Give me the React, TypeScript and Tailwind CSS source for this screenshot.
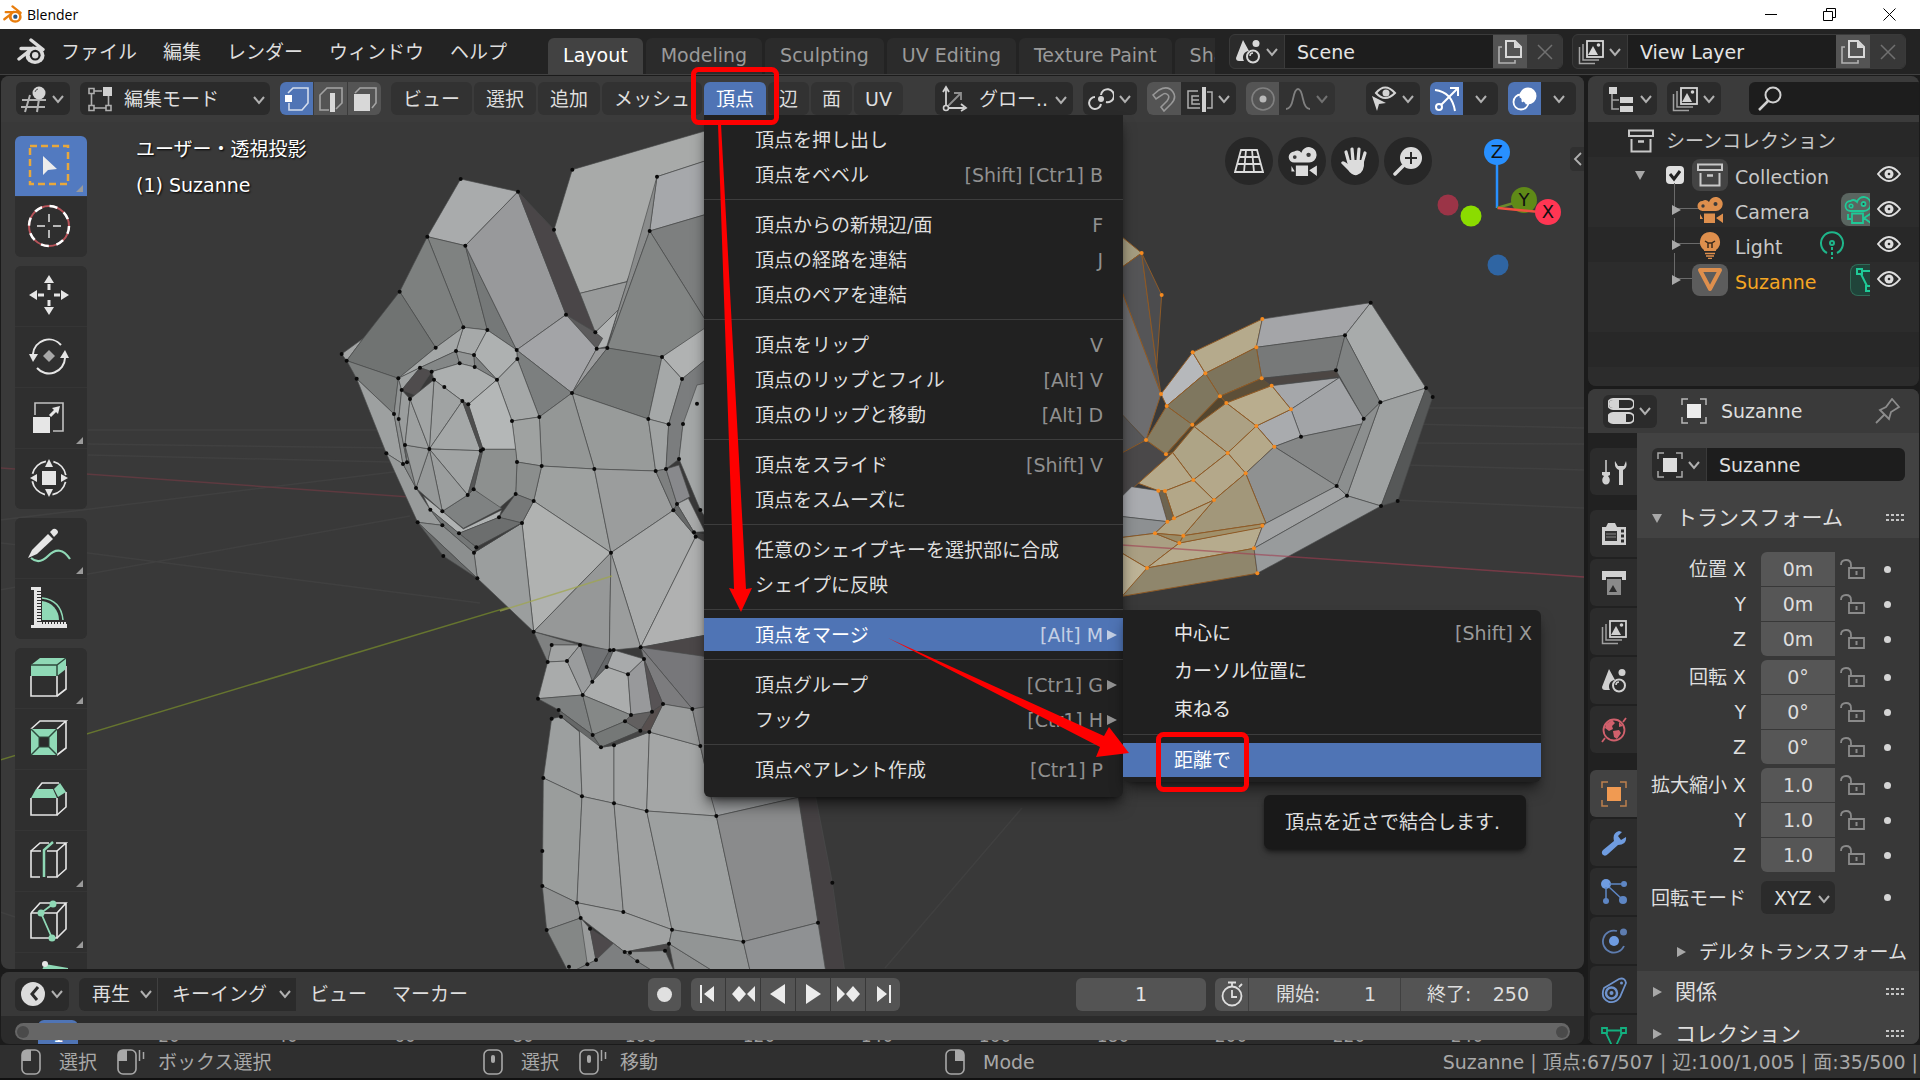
import type { ReactNode } from "react";
import clsx from "clsx";

type Face = [fill: string, points: string, selected?: boolean];

const HEAD_FACES: Face[] = [
  ["#a2a4a4", "65,672 130,625 80,692"],
  ["#a9abac", "422,147 594,185 436,347 322,320"],
  ["#7f8281", "322,320 436,347 502,600 430,592"],
  ["#7d807f", "322,320 430,592 347,653 239,485"],
  ["#707372", "239,485 347,653 235,745 80,692 130,625"],
  ["#757878", "436,347 590,660 502,600"],
  ["#98999b", "436,347 594,185 738,554 590,660"],
  ["#4a4648", "594,185 702,299 826,607 738,554"],
  ["#5c5b5c", "738,554 826,607 848,625 830,656"],
  ["#a3a4a7", "590,660 738,554 830,656 756,789"],
  ["#a8aaa9", "757,119 1155,3 1155,93 1011,140 989,303 920,455 780,490 702,299"],
  ["#989a9a", "780,490 922,455 895,540 826,607"],
  ["#b0b2b2", "895,540 860,650 830,656 848,625 826,607"],
  ["#a6a8ab", "1011,140 1155,93 1155,254 989,303"],
  ["#8a8c8c", "1011,140 989,303 862,654 895,540 920,460"],
  ["#7d7f7f", "989,303 1155,254 1155,568"],
  ["#828584", "989,303 1155,568 1155,596 1026,681 862,654"],
  ["#9a9b9c", "862,654 756,789 830,656"],
  ["#757877", "862,654 1026,681 985,867 756,789"],
  ["#7c7f7f", "590,660 756,789 658,861 592,687"],
  ["#989b9a", "756,789 985,867 1007,1023 823,1017"],
  ["#949796", "756,789 823,1017 665,1008 658,861"],
  ["#9ea1a0", "665,1008 823,1017 873,1268 641,1113"],
  ["#9b9d9d", "823,1017 1007,1023 1060,1141 873,1268"],
  ["#b0b2b1", "641,1113 873,1268 641,1505 606,1179"],
  ["#a9abab", "873,1268 1060,1141 1127,1220 962,1552"],
  ["#9b9e9e", "606,1179 641,1505 472,1345 462,1268"],
  ["#a6a9a9", "430,592 502,600 462,675 408,663"],
  ["#a4a7a7", "347,653 430,592 408,663 300,713 235,745"],
  ["#aeb1b1", "502,600 590,660 592,687 531,749 462,675"],
  ["#a5a8a8", "592,687 658,861 576,873 531,749"],
  ["#9fa2a1", "658,861 665,1008 591,996 576,873"],
  ["#8b8e8d", "591,996 665,1008 641,1113 587,1092"],
  ["#777979", "587,1092 641,1113 606,1179 537,1162"],
  ["#7b7e7d", "80,692 235,745 222,852 110,746"],
  ["#9da0a0", "110,746 222,852 249,1002 199,970"],
  ["#989b9b", "199,970 249,1002 288,1074 331,1139 367,1186 293,1177"],
  ["#8c8f8f", "293,1177 367,1186 462,1268 472,1345"],
  ["#666868", "293,1177 472,1345 370,1278"],
  ["#8f9292", "235,745 245,780 236,867 261,997 249,1002 222,852"],
  ["#9a9d9d", "245,780 270,807 255,945 261,997 236,867"],
  ["#848787", "255,945 288,1074 249,1002 261,997"],
  ["#a0a3a3", "235,745 300,713 245,780"],
  ["#848787", "300,713 408,663 419,700 335,725"],
  ["#919494", "408,663 462,675 464,711 419,700"],
  ["#7f8282", "462,675 531,749 464,711"],
  ["#acafaf", "335,725 419,700 464,711 531,749 445,823 427,813 342,749"],
  ["#4f4c4d", "245,780 300,713 335,725 308,765 290,797"],
  ["#b4b7b7", "445,823 531,749 576,873 587,958 489,958"],
  ["#8d908f", "489,958 587,958 591,996 587,1092 537,1135 461,1078"],
  ["#7f8282", "443,1095 461,1078 545,1135 430,1195 367,1144"],
  ["#b0b3b3", "310,1098 367,1144 430,1197 545,1140 537,1162 417,1210 331,1139"],
  ["#6c6e6e", "417,1210 537,1162 606,1179 469,1252"],
  ["#747777", "331,1139 417,1210 469,1252 462,1268 367,1186"],
  ["#3a3a3a", "469,1252 606,1179 462,1268"],
  ["#a0a3a3", "328,957 342,749 427,813"],
  ["#a5a8a8", "328,957 427,813 482,962"],
  ["#a1a4a4", "328,957 482,962 443,1095"],
  ["#9b9e9e", "328,957 443,1095 367,1144"],
  ["#969999", "328,957 367,1144 288,1074"],
  ["#989b9b", "328,957 288,1074 255,945"],
  ["#9ea1a1", "328,957 255,945 270,807"],
  ["#a1a4a4", "328,957 270,807 342,749"],
  ["#4e4e4e", "427,813 445,823 489,958 482,962"],
  ["#555656", "482,962 489,958 461,1078 443,1095"],
  ["#b0b2b2", "1026,681 1155,594 1155,692 1086,747"],
  ["#a5a8a8", "985,867 1026,681 1086,747 1046,883"],
  ["#a0a3a3", "985,867 1046,883 1038,1017 1007,1023"],
  ["#7b7d7e", "1046,883 1086,747 1155,690 1155,800 1089,882 1077,987 1038,1017"],
  ["#a4a7a7", "1089,882 1131,765 1155,760 1155,1160 1141,1140 1077,987"],
  ["#7e8080", "1007,1023 1038,1017 1071,1122 1060,1141"],
  ["#88898c", "1038,1017 1077,1005 1110,1100 1071,1122"],
  ["#a9abab", "1071,1122 1105,1105 1155,1205 1122,1207"],
  ["#666868", "1060,1141 1071,1122 1122,1207 1127,1220"],
  ["#444343", "1122,1207 1155,1215 1155,1235"],
  ["#b0b1b1", "1127,1220 1155,1235 1155,1516 962,1552"]
];

const HEAD_DOTS =
  "422,147 594,185 436,347 322,320 239,485 347,653 235,745 80,692 65,672 110,746 702,299 757,119 1011,140 989,303 738,554 826,607 830,656 862,654 590,660 592,687 756,789 658,861 502,600 430,592 408,663 462,675 464,711 419,700 531,749 300,713 335,725 245,780 342,749 373,771 427,813 445,823 270,807 222,852 236,867 255,945 249,1002 261,997 328,957 482,962 489,958 576,873 591,996 665,1008 823,1017 1007,1023 1038,1017 985,867 1046,883 1026,681 1086,747 1089,882 1131,821 1077,987 587,1092 641,1113 606,1179 537,1162 461,1078 443,1095 367,1144 288,1074 331,1139 367,1186 293,1177 417,1210 469,1252 462,1268 472,1345 370,1278 199,970 873,1268 1060,1141 1071,1122 1141,1140 1122,1207 1127,1220";

const JAW_FACES: Face[] = [
  ["#969898", "333,-22 101,215 328,272"],
  ["#9b9d9d", "333,-22 422,262 341,270 328,272"],
  ["#4b4748", "422,262 620,225 620,292"],
  ["#77777a", "422,262 620,290 620,440 577,447"],
  ["#7f8181", "101,215 240,255 155,255 143,306"],
  ["#a2a4a4", "155,255 240,255 201,303 143,306"],
  ["#717375", "240,255 330,270 277,365"],
  ["#66686a", "328,272 341,270 320,321 277,365"],
  ["#a9abab", "143,306 201,303 248,405 114,416"],
  ["#9a9c9d", "201,303 240,255 277,365 248,405"],
  ["#a8aaab", "341,270 432,297 384,343 320,321"],
  ["#abadad", "320,321 384,343 393,465 248,405 277,365"],
  ["#98999b", "384,343 432,297 456,455 393,465"],
  ["#7c7c7e", "422,262 577,447 489,432 432,297"],
  ["#575355", "432,297 489,432 456,455"],
  ["#9c9f9f", "155,476 183,470 238,515 246,709 130,654"],
  ["#a2a4a4", "238,505 303,562 342,556 342,730 246,709"],
  ["#a3a5a5", "342,556 448,516 440,753 342,730"],
  ["#a4a6a6", "448,516 601,558 649,768 440,753"],
  ["#9a9c9c", "489,432 577,447 601,558 448,516"],
  ["#88898a", "577,447 620,440 620,640 601,558"],
  ["#7d8080", "114,416 248,405 278,525 176,450"],
  ["#858887", "248,405 393,465 375,484 278,525"],
  ["#666868", "176,450 278,525 303,562 183,470"],
  ["#757877", "278,525 375,484 421,512 303,562"],
  ["#626060", "375,484 393,465 456,455 421,512"],
  ["#574f4e", "456,455 489,432 448,516 421,512"],
  ["#454545", "303,562 421,512 448,516 342,556"],
  ["#9a9d9c", "130,654 246,709 231,1028 127,978"],
  ["#9d9f9f", "246,709 342,730 370,1056 231,1028"],
  ["#9fa1a1", "342,730 440,753 516,1109 370,1056"],
  ["#9da0a0", "440,753 649,768 730,1145 516,1109"],
  ["#9ea0a2", "649,768 630,700 895,700 895,712"],
  ["#8a8b8c", "649,768 895,712 954,1088 730,1145"],
  ["#454143", "895,700 945,700 997,968 1035,1240 978,1240"],
  ["#8f9191", "127,978 231,1028 242,1074 140,1110"],
  ["#848786", "140,1110 242,1074 288,1200 262,1213 207,1240"],
  ["#9a9c9c", "242,1074 270,1106 288,1200 262,1213"],
  ["#a0a2a2", "242,1074 231,1028 370,1056 516,1109 507,1151 374,1176"],
  ["#4d494b", "270,1106 340,1150 288,1200"],
  ["#7d7f80", "340,1150 374,1176 412,1204 470,1240 207,1240 288,1200"],
  ["#4a4849", "374,1176 507,1151 495,1172"],
  ["#8e9090", "374,1176 495,1172 525,1240 470,1240 412,1204"],
  ["#8b8d8d", "507,1151 650,1240 525,1240"],
  ["#929595", "507,1151 516,1109 730,1145 752,1240 650,1240"],
  ["#8f9193", "730,1145 954,1088 978,1240 752,1240"]
];

const JAW_DOTS =
  "101,215 155,255 240,255 330,271 341,270 422,262 432,297 320,321 384,343 201,303 143,306 277,365 248,405 114,416 176,450 183,470 155,476 278,525 303,562 342,556 375,484 393,465 421,512 448,516 456,455 489,432 577,447 601,558 130,654 246,709 342,730 440,753 649,768 127,873 127,978 231,1028 242,1074 270,1106 140,1110 370,1056 516,1109 507,1151 495,1172 374,1176 390,1178 412,1204 288,1200 262,1213 207,1220 730,1145 954,1088 997,968";

const EAR_FACES: Face[] = [
  ["#a59d80", "60,346 125,399 60,446", true],
  ["#555557", "60,446 125,399 170,740 183,822 60,500", true],
  ["#4c4c4e", "125,399 185,525 170,740", true],
  ["#6d6d6f", "60,500 183,822 138,960 60,877", true],
  ["#575759", "60,877 138,960 60,1002"],
  ["#4a4849", "60,1002 138,960 198,1003 218,998 115,1090 60,1140", true],
  ["#b6b8bb", "278,697 316,760 200,858 183,822", true],
  ["#b5aa8c", "487,597 469,682 316,760 278,697", true],
  ["#a4a5a8", "487,597 812,548 735,646 469,682"],
  ["#777979", "469,682 735,646 708,751 485,775"],
  ["#7d745c", "316,760 469,682 485,775 360,829", true],
  ["#7f775f", "200,858 316,760 360,829 277,914", true],
  ["#857c62", "200,858 277,914 198,1003 138,960", true],
  ["#5d4f38", "360,829 485,775 515,797 379,849", true],
  ["#4c4643", "485,775 708,751 718,770 515,797"],
  ["#54462f", "360,829 379,849 283,920 218,998 198,1003 277,914", true],
  ["#a8abab", "812,548 978,804 841,847 735,646"],
  ["#7f8282", "735,646 841,847 791,896 708,751"],
  ["#9ea1a1", "978,804 843,1158 741,1127 841,847"],
  ["#565858", "978,804 998,831 893,1143 843,1158"],
  ["#8c8f8f", "841,847 741,1127 710,1098 791,896"],
  ["#a5a7aa", "515,797 718,773 573,868"],
  ["#a2a4a7", "718,773 791,896 785,912 603,950 573,868"],
  ["#a9abae", "469,918 573,868 603,950 523,980"],
  ["#b9ad8e", "379,849 515,797 573,868 469,918", true],
  ["#aca184", "283,920 379,849 469,918 383,999", true],
  ["#b5a98a", "383,999 469,918 523,980 437,1060", true],
  ["#858787", "603,950 785,912 710,1098 523,980"],
  ["#8f9191", "437,1060 523,980 710,1098 498,1210"],
  ["#aea486", "218,998 283,920 383,999 280,1080", true],
  ["#b4a88a", "280,1080 383,999 437,1060 342,1140", true],
  ["#b5a98a", "115,1090 218,998 280,1080 195,1113 175,1112", true],
  ["#b3a788", "195,1113 280,1080 342,1140 222,1195", true],
  ["#6d6450", "175,1112 195,1113 222,1195 202,1205", true],
  ["#a9abaf", "95,1100 175,1112 202,1205 60,1189 60,1135"],
  ["#8d9092", "60,1189 202,1205 165,1240 60,1253"],
  ["#a2977a", "342,1140 437,1060 498,1210 250,1247", true],
  ["#b0a485", "342,1140 250,1247 165,1240 202,1205 222,1195", true],
  ["#aa9f83", "60,1253 165,1240 238,1269 141,1344 60,1296", true],
  ["#b6ab8d", "238,1269 487,1220 462,1285 141,1344", true],
  ["#a0906a", "250,1247 498,1210 487,1222 238,1269", true],
  ["#9a8a65", "165,1240 250,1247 238,1269", true],
  ["#8f866c", "141,1344 462,1285 472,1360 60,1430", true],
  ["#bdb396", "60,1296 141,1344 60,1436", true],
  ["#a2a4a5", "498,1210 710,1098 741,1127 462,1285 487,1220"],
  ["#989b9c", "462,1285 741,1127 843,1158 472,1360"]
];

const EAR_DOTS = "812,548 735,646 708,751 978,804 998,831 841,847 791,896 603,950 710,1098 741,1127 843,1158 893,1143";
const EAR_SELECTED_DOTS =
  "125,399 185,525 487,597 469,682 278,697 316,760 183,822 200,858 360,829 379,849 485,775 515,797 573,868 277,914 469,918 523,980 138,960 198,1003 383,999 437,1060 280,1080 342,1140 175,1112 195,1113 222,1195 202,1205 165,1240 250,1247 238,1269 487,1217 462,1285 141,1344 472,1360";

const Mesh = ({ faces, origin }: { faces: Face[]; origin: string }) => (
  <g transform={`translate(${origin}) scale(0.33333)`} strokeLinejoin="round">
    {faces.map(([fill, points, selected], i) => (
      <polygon key={i} points={points} fill={fill} stroke={selected ? "#8f5a26" : "#4a4b4b"} strokeWidth={selected ? 3 : 2} />
    ))}
  </g>
);

const Dots = ({ points, origin, color }: { points: string; origin: string; color: string }) => (
  <g transform={`translate(${origin}) scale(0.33333)`} fill={color}>
    {points.split(" ").map((p, i) => {
      const [cx, cy] = p.split(",");
      return <circle key={i} cx={cx} cy={cy} r="6" />;
    })}
  </g>
);

const Scene3D = () => (
  <svg
    className="absolute inset-0 h-full w-full rounded-lg"
    viewBox="1 76 1583 893"
    preserveAspectRatio="xMidYMid slice"
    aria-hidden="true"
  >
    <g stroke="#404040" strokeWidth="1.5" fill="none">
      <path d="M0 590L410 516M0 520L410 470M88 553L480 603M0 543L88 553M88 444L400 448M88 430L390 430M88 455L390 462" />
      <path d="M1410 408H1584M1410 424L1584 428M1412 443L1584 444M1405 465L1584 470M1395 500L1584 508M1022 808L885 968M0 912L15 917" />
    </g>
    <path d="M0 468L410 497" stroke="#5e3a40" strokeWidth="1.5" />
    <path d="M0 760L612 576" stroke="#66752f" strokeWidth="1.5" />
    <Mesh faces={HEAD_FACES} origin="320 130" />
    <Mesh faces={JAW_FACES} origin="500 560" />
    <Dots points={HEAD_DOTS} origin="320 130" color="#0a0a0a" />
    <Dots points={JAW_DOTS} origin="500 560" color="#0a0a0a" />
    <path d="M500 611L612 576" stroke="#a0a64a" strokeOpacity="0.7" strokeWidth="1.5" />
    <Mesh faces={EAR_FACES} origin="1100 120" />
    <Dots points={EAR_DOTS} origin="1100 120" color="#0a0a0a" />
    <Dots points={EAR_SELECTED_DOTS} origin="1100 120" color="#f58a1f" />
    <path d="M1122 545L1584 577" stroke="#a03c50" strokeOpacity="0.6" strokeWidth="1.5" />
  </svg>
);

const Svg = ({ w, h, className, children }: { w: number; h: number; className?: string; children: ReactNode }) => (
  <svg width={w} height={h} viewBox={`0 0 ${w} ${h}`} fill="none" stroke="currentColor" className={clsx("shrink-0", className)} aria-hidden="true">
    {children}
  </svg>
);

const Chevron = ({ className }: { className?: string }) => (
  <Svg w={14} h={10} className={clsx("text-[#b0b0b0]", className)}>
    <path d="M2 2L7 8L12 2" strokeWidth="2" />
  </Svg>
);

const Triangle = ({ open }: { open?: boolean }) => (
  <Svg w={12} h={12} className="text-[#a8a8a8]">
    <path d={open ? "M1 2H11L6 11Z" : "M2 1L11 6L2 11Z"} fill="currentColor" stroke="none" />
  </Svg>
);

const BlenderLogo = ({ w, body, ring, dot }: { w: number; body: string; ring: string; dot: string }) => (
  <svg width={w} height={w} viewBox="0 0 28 28" className="shrink-0" aria-hidden="true">
    <path d="M14 2L26 11.500M4 10.500H22M2 21L16 10" stroke={body} strokeWidth="3.400" strokeLinecap="round" fill="none" />
    <ellipse cx="18" cy="17.500" rx="9.500" ry="8.500" fill={body} />
    <circle cx="18.200" cy="17.200" r="5.400" fill={ring} />
    <circle cx="18.200" cy="17.200" r="3.200" fill={dot} />
  </svg>
);

const SceneIcon = () => (
  <Svg w={26} h={26}>
    <path d="M8 1L14 12A6.500 6.500 0 0 0 9 22H4Q1 22 1 19Z" fill="currentColor" stroke="none" />
    <circle cx="21" cy="4.500" r="3.500" fill="currentColor" stroke="none" />
    <circle cx="18" cy="17.500" r="6" strokeWidth="2" />
    <path d="M15 17A3 3 0 0 1 18 14" strokeWidth="1.500" />
  </Svg>
);

const LayersIcon = () => (
  <Svg w={26} h={26}>
    <rect x="9" y="2" width="16" height="16" strokeWidth="1.800" />
    <path d="M10 16L15 7L20 16Z" fill="currentColor" stroke="none" />
    <circle cx="20.500" cy="6" r="1.800" fill="currentColor" stroke="none" />
    <path d="M5 5V21H21M1.500 8V24.500H17" strokeWidth="1.500" opacity="0.7" />
  </Svg>
);

const CopyIcon = () => (
  <Svg w={26} h={26}>
    <path d="M9 2H18L24 8V18H9Z" strokeWidth="2" />
    <path d="M17 2V9H24Z" fill="currentColor" stroke="none" />
    <path d="M5 8H2V24H18V21" strokeWidth="1.600" opacity="0.7" />
  </Svg>
);

const ObjectIcon = ({ className }: { className?: string }) => (
  <Svg w={26} h={26} className={className}>
    <rect x="6" y="6" width="14" height="14" fill="currentColor" stroke="none" />
    <path d="M1 7V1H7M19 1H25V7M25 19V25H19M7 25H1V19" strokeWidth="1.500" opacity="0.7" />
  </Svg>
);

const MovieCamera = ({ w = 28, outline, className }: { w?: number; outline?: boolean; className?: string }) => (
  <svg width={w} height={w} viewBox="0 0 28 28" className={clsx("shrink-0", className)} fill={outline ? "none" : "currentColor"} stroke={outline ? "currentColor" : "none"} strokeWidth="1.800" aria-hidden="true">
    <path d="M6.500 5A5 5 0 0 0 6.500 15H20A7 7 0 1 0 13 6A5 5 0 0 0 6.500 5Z" />
    <circle cx="7" cy="10" r="1.700" fill="#3b3b3b" />
    <circle cx="19.500" cy="8" r="2" fill="#3b3b3b" />
    <path d="M8 17.500H19V27H8ZM20 22L27 17.500V27ZM4 18V23H7" />
  </svg>
);

const ArchiveIcon = () => (
  <Svg w={26} h={24}>
    <path d="M1 1.500H25V7H1ZM3.500 10V22.500H22.500V10" strokeWidth="2" />
    <path d="M10 12.500H16" strokeWidth="2.500" />
  </Svg>
);

const EyeIcon = () => (
  <Svg w={24} h={18} className="text-[#dedede]">
    <path d="M1 9Q12 -5 23 9Q12 23 1 9Z" strokeWidth="2" />
    <circle cx="12" cy="9" r="4.500" fill="currentColor" stroke="none" />
    <circle cx="12" cy="9" r="1.300" fill="#2a2a2a" stroke="none" />
  </Svg>
);

const Grip = () => (
  <Svg w={20} h={10} className="text-[#c4c4c4]">
    <path d="M1 2H20M1 7H20" strokeWidth="2" strokeDasharray="3 2" />
  </Svg>
);

const DARK = "flex h-[33px] items-center rounded-md bg-[#2b2b2b] text-[#d4d4d4]";

const IconMenu = ({ label, className, children }: { label: string; className?: string; children: ReactNode }) => (
  <button type="button" aria-label={label} className={clsx(DARK, "w-[54px] shrink-0 justify-center gap-1", className)}>
    {children}
    <Chevron />
  </button>
);

const WORKSPACES = ["Modeling", "Sculpting", "UV Editing", "Texture Paint", "Shading"];

const IdBlock = ({ name, icon }: { name: string; icon: ReactNode }) => (
  <div className="flex h-[35px] w-[334px] overflow-hidden rounded-md border border-[#3a3a3a] bg-[#2b2b2b] text-[#d8d8d8]">
    <button type="button" aria-label={`${name} を閲覧`} className="flex w-[54px] items-center justify-center gap-1">
      {icon}
      <Chevron />
    </button>
    <input aria-label={name} defaultValue={name} className="min-w-0 flex-1 border-l border-[#3a3a3a] bg-[#1d1d1d] px-3 text-[#e4e4e4] outline-none" />
    <button type="button" aria-label={`${name} を追加`} className="flex w-[34px] items-center justify-center bg-[#545454]">
      <CopyIcon />
    </button>
    <button type="button" aria-label={`${name} を削除`} className="flex w-[35px] items-center justify-center bg-[#383838] text-[#707070]">
      <Svg w={16} h={16}>
        <path d="M1 1L15 15M15 1L1 15" strokeWidth="1.500" />
      </Svg>
    </button>
  </div>
);

const TitleBar = () => (
  <header className="flex h-[29px] shrink-0 items-center bg-white pl-[3px] text-black">
    <BlenderLogo w={19} body="#e87d0d" ring="#ffffff" dot="#265787" />
    <span className="ml-[5px] font-['Open_Sans',sans-serif] text-[14px]">Blender</span>
    <div className="ml-auto flex">
      <button type="button" aria-label="最小化" className="flex h-[29px] w-[58px] items-center justify-center">
        <Svg w={12} h={12}><path d="M0 5.500H12" /></Svg>
      </button>
      <button type="button" aria-label="元に戻す" className="flex h-[29px] w-[58px] items-center justify-center">
        <Svg w={13} h={13}><path d="M0.500 3.500H9.500V12.500H0.500ZM3.500 3V0.500H12.500V9.500H10" /></Svg>
      </button>
      <button type="button" aria-label="閉じる" className="flex h-[29px] w-[62px] items-center justify-center">
        <Svg w={13} h={13}><path d="M0.500 0.500L12.500 12.500M12.500 0.500L0.500 12.500" /></Svg>
      </button>
    </div>
  </header>
);

const TopBar = () => (
  <div className="flex h-[46px] shrink-0 items-center border-b border-[#414141] bg-[#232323] pl-[17px] pr-[14px]">
    <button type="button" aria-label="Blender" className="mr-[3px]">
      <BlenderLogo w={28} body="#dcdcdc" ring="#232323" dot="#dcdcdc" />
    </button>
    {["ファイル", "編集", "レンダー", "ウィンドウ", "ヘルプ"].map((m) => (
      <button key={m} type="button" className="h-full shrink-0 px-[13px] text-[#dedede]">
        {m}
      </button>
    ))}
    <nav className="ml-[28px] mr-[14px] flex min-w-0 flex-1 gap-[3px] self-end overflow-hidden text-[#9a9a9a]">
      <button type="button" className="h-[36px] shrink-0 rounded-t-md bg-[#424242] px-[15px] pb-[2px] text-white">
        Layout
      </button>
      {WORKSPACES.map((w) => (
        <button key={w} type="button" className="h-[36px] shrink-0 rounded-t-md bg-[#2b2b2b] px-[15px] pb-[2px]">
          {w}
        </button>
      ))}
    </nav>
    <div className="flex shrink-0 gap-[9px]">
      <IdBlock name="Scene" icon={<SceneIcon />} />
      <IdBlock name="View Layer" icon={<LayersIcon />} />
    </div>
  </div>
);

type MenuEntry = { label: string; keys?: string; sub?: boolean; active?: boolean } | "-";

const VERTEX_MENU: MenuEntry[] = [
  { label: "頂点を押し出し" },
  { label: "頂点をベベル", keys: "[Shift] [Ctr1] B" },
  "-",
  { label: "頂点からの新規辺/面", keys: "F" },
  { label: "頂点の経路を連結", keys: "J" },
  { label: "頂点のペアを連結" },
  "-",
  { label: "頂点をリップ", keys: "V" },
  { label: "頂点のリップとフィル", keys: "[Alt] V" },
  { label: "頂点のリップと移動", keys: "[Alt] D" },
  "-",
  { label: "頂点をスライド", keys: "[Shift] V" },
  { label: "頂点をスムーズに" },
  "-",
  { label: "任意のシェイプキーを選択部に合成" },
  { label: "シェイプに反映" },
  "-",
  { label: "頂点をマージ", keys: "[Alt] M", sub: true, active: true },
  "-",
  { label: "頂点グループ", keys: "[Ctr1] G", sub: true },
  { label: "フック", keys: "[Ctr1] H", sub: true },
  "-",
  { label: "頂点ペアレント作成", keys: "[Ctr1] P" }
];

const MERGE_MENU: MenuEntry[] = [
  { label: "中心に", keys: "[Shift] X" },
  { label: "カーソル位置に" },
  { label: "束ねる" },
  "-",
  { label: "距離で", active: true }
];

const MenuRule = ({ className }: { className: string }) => (
  <li className={clsx("flex items-center", className)} role="separator">
    <span className="h-px w-full bg-[#3d3d3d]" />
  </li>
);

const MergeMenu = () => (
  <div className="absolute -top-[7px] left-full w-[418px]">
    <ul className="rounded-r-md rounded-bl-md bg-[#202020] pt-1 pb-[3px] shadow-lg shadow-black/50">
      {MERGE_MENU.map((m, i) =>
        m === "-" ? (
          <MenuRule key={i} className="h-[13px]" />
        ) : (
          <li key={i} className="h-[38px] py-[2px]">
            <button type="button" className={clsx("flex h-full w-full items-center pl-[51px] pr-[9px] text-[#e6e6e6]", m.active && "bg-[#4f74b5] text-white")}>
              {m.label}
              <span className="ml-auto text-[#9a9a9a]">{m.keys}</span>
            </button>
          </li>
        )
      )}
    </ul>
    <p role="tooltip" className="mt-[13px] ml-[141px] flex h-[54px] w-[262px] items-center rounded-md bg-[#191919] pl-[21px] text-[#e0e0e0] shadow-md shadow-black/50">
      頂点を近さで結合します.
    </p>
  </div>
);

const VertexMenu = () => (
  <ul className="absolute left-0 top-full z-20 w-[419px] rounded-b-md bg-[#212121] pt-[7px] pb-[10px] text-[#dedede] shadow-lg shadow-black/60">
    {VERTEX_MENU.map((m, i) =>
      m === "-" ? (
        <MenuRule key={i} className="h-[15px]" />
      ) : (
        <li key={i} className="relative h-[35px] py-px">
          <button type="button" className={clsx("relative flex h-full w-full items-center pl-[51px] pr-5", m.active && "bg-[#4f74b5] text-white")}>
            {m.label}
            <span className={clsx("ml-auto", m.active ? "text-[#c3cfe4]" : "text-[#909090]")}>{m.keys}</span>
            {m.sub ? (
              <Svg w={12} h={12} className={clsx("absolute right-[5px]", m.active ? "text-[#c3cfe4]" : "text-[#909090]")}>
                <path d="M1 1L11 6L1 11Z" fill="currentColor" stroke="none" />
              </Svg>
            ) : null}
          </button>
          {m.active ? <MergeMenu /> : null}
        </li>
      )
    )}
  </ul>
);

const ViewportHeader = () => (
  <div className="relative flex h-[46px] items-center rounded-t-lg bg-[#3b3b3b] pb-[1px] pl-[15px] pr-2">
    <IconMenu label="エディタータイプ">
      <Svg w={26} h={28}>
        <path d="M1 15H25M0 22H24M9 10L4 27M18 14L16 27" strokeWidth="2" opacity="0.8" />
        <circle cx="18" cy="8" r="6.500" fill="currentColor" stroke="none" />
        <path d="M14 7A4 4 0 0 1 17 4" stroke="#555" />
      </Svg>
    </IconMenu>
    <div className="relative ml-[10px]">
      <Svg w={26} h={26} className="pointer-events-none absolute left-[7px] top-[4px] text-[#d0d0d0]">
        <path d="M2 2.500H7V7.500H2ZM2 19.500H7V24.500H2ZM19 19.500H24V24.500H19ZM4.500 8V19M7 22H19M21.500 9V19M7 5H15" strokeWidth="1.600" opacity="0.8" />
        <path d="M16 1H25V10H16Z" fill="currentColor" stroke="none" />
      </Svg>
      <select aria-label="モード" className={clsx(DARK, "w-[190px] appearance-none pl-[44px] text-[#dedede]")}>
        <option>編集モード</option>
      </select>
      <Chevron className="pointer-events-none absolute right-[4px] top-[13px]" />
    </div>
    <div className="ml-[10px] flex h-[33px] gap-px overflow-hidden rounded-md text-[#d8d8d8]">
      <button type="button" aria-label="頂点選択" className="flex w-[33px] items-center justify-center bg-[#4f74b5] text-white">
        <Svg w={26} h={26}>
          <path d="M4 7L9 2H24V17L18 24H5V17" strokeWidth="1.600" opacity="0.75" />
          <path d="M1 9H8V16H1Z" fill="currentColor" stroke="none" />
        </Svg>
      </button>
      <button type="button" aria-label="辺選択" className="flex w-[33px] items-center justify-center bg-[#545454]">
        <Svg w={26} h={26}>
          <path d="M11 24H2V9L9 2H24V17L18 23" strokeWidth="1.600" opacity="0.6" />
          <path d="M12 7H17V26H12Z" fill="currentColor" stroke="none" />
        </Svg>
      </button>
      <button type="button" aria-label="面選択" className="flex w-[33px] items-center justify-center bg-[#545454]">
        <Svg w={26} h={26}>
          <path d="M3 7L8 2H24V17L20 22" strokeWidth="1.600" opacity="0.6" />
          <path d="M2 8H18V25H2Z" fill="currentColor" stroke="none" />
        </Svg>
      </button>
    </div>
    <div className="ml-[10px] flex gap-[2px]">
      {["ビュー", "選択", "追加", "メッシュ"].map((m) => (
        <button key={m} type="button" className="h-[33px] rounded-md bg-[#323232] px-3 text-[#dedede]">
          {m}
        </button>
      ))}
      <div className="relative">
        <button type="button" aria-expanded="true" className="h-[33px] rounded-t-md bg-[#4f74b5] px-3 text-white">
          頂点
        </button>
        <VertexMenu />
      </div>
      {["辺", "面", "UV"].map((m) => (
        <button key={m} type="button" className="h-[33px] rounded-md bg-[#323232] px-[11px] text-[#dedede]">
          {m}
        </button>
      ))}
    </div>
    <div className="relative ml-[32px]">
      <Svg w={26} h={28} className="pointer-events-none absolute left-[7px] top-[3px] text-[#d0d0d0]">
        <path d="M4 4V23H22M1 7L4 2L7 7M19 19L24 23L19 26" strokeWidth="1.800" />
        <path d="M6 21L18 9M12 8H19V15" strokeWidth="1.800" opacity="0.6" />
        <circle cx="4" cy="23" r="2.500" fill="#2b2b2b" strokeWidth="1.600" />
      </Svg>
      <select aria-label="座標系" className={clsx(DARK, "w-[138px] appearance-none pl-[44px] text-[#dedede]")}>
        <option>グロー..</option>
      </select>
      <Chevron className="pointer-events-none absolute right-[5px] top-[13px]" />
    </div>
    <IconMenu label="ピボットポイント" className="ml-[10px]">
      <Svg w={26} h={28}>
        <path d="M13 19A6 6 0 1 1 7 12M13 10A6.500 6.500 0 1 1 18 17" strokeWidth="2" />
        <circle cx="13" cy="14" r="3" fill="currentColor" stroke="none" />
      </Svg>
    </IconMenu>
    <div className="ml-[10px] flex h-[33px] w-[89px] overflow-hidden rounded-md bg-[#2b2b2b] text-[#d0d0d0]">
      <button type="button" aria-label="スナップ" className="flex w-[34px] items-center justify-center bg-[#545454] text-[#989898]">
        <Svg w={26} h={26}>
          <path d="M2 9L8 4Q17 -1 22 6Q26 12 20 18L13 25L10 21L16 15Q19 11 17 9Q14 6 11 9L5 13Z" strokeWidth="1.600" />
        </Svg>
      </button>
      <button type="button" aria-label="スナップ先" className="flex flex-1 items-center justify-center gap-1">
        <Svg w={26} h={28}>
          <path d="M11 6H1V23H13M12 11H5V19H13M5 15H12M20 7H25V23H20" strokeWidth="1.500" opacity="0.8" />
          <path d="M15 2H19V27H15Z" fill="currentColor" stroke="none" />
        </Svg>
        <Chevron />
      </button>
    </div>
    <div className="ml-[10px] flex h-[33px] w-[89px] overflow-hidden rounded-md bg-[#323232] text-[#808080]">
      <button type="button" aria-label="プロポーショナル編集" className="flex w-[33px] items-center justify-center bg-[#545454]">
        <Svg w={26} h={26}>
          <circle cx="13" cy="13" r="11" strokeWidth="1.600" />
          <circle cx="13" cy="13" r="3.500" fill="#b8b8b8" stroke="none" />
        </Svg>
      </button>
      <button type="button" aria-label="減衰" className="flex flex-1 items-center justify-center gap-1">
        <Svg w={26} h={24}>
          <path d="M1 22Q6 22 8 12T13 2T18 12T25 22" strokeWidth="1.800" />
        </Svg>
        <Chevron className="opacity-50" />
      </button>
    </div>
    <IconMenu label="可視性" className="ml-auto">
      <Svg w={26} h={26}>
        <path d="M5 7Q14 -4 24 7Q14 17 5 7Z" strokeWidth="2" />
        <circle cx="15" cy="7" r="3.500" fill="currentColor" stroke="none" />
        <path d="M1 10L15 17L8 18L6 25Z" fill="currentColor" stroke="none" />
      </Svg>
    </IconMenu>
    <div className="ml-[10px] flex h-[33px] w-[68px] overflow-hidden rounded-md bg-[#2b2b2b]">
      <button type="button" aria-label="ギズモ" className="flex w-[33px] items-center justify-center bg-[#4f74b5] text-white">
        <Svg w={26} h={26}>
          <path d="M1 4Q18 6 21 25M6 20L23 3M16 2H24V10" strokeWidth="2" />
          <circle cx="5" cy="21" r="3" fill="#4f74b5" strokeWidth="2" />
        </Svg>
      </button>
      <button type="button" aria-label="ギズモ設定" className="flex flex-1 items-center justify-center"><Chevron /></button>
    </div>
    <div className="ml-[10px] flex h-[33px] w-[68px] overflow-hidden rounded-md bg-[#2b2b2b]">
      <button type="button" aria-label="オーバーレイ" className="flex w-[33px] items-center justify-center bg-[#4f74b5] text-white">
        <Svg w={26} h={26}>
          <circle cx="9" cy="16" r="7.500" strokeWidth="1.800" />
          <circle cx="16" cy="10" r="8.500" fill="currentColor" stroke="none" />
          <path d="M8 12A8 8 0 0 0 14 18" stroke="#4f74b5" strokeWidth="1.800" strokeDasharray="3 2" />
        </Svg>
      </button>
      <button type="button" aria-label="オーバーレイ設定" className="flex flex-1 items-center justify-center"><Chevron /></button>
    </div>
  </div>
);

const MINT = "#8fd9b6";

const Cube = ({ children, front = "M2 13V38H28V13H2", top = "M2 13L11 3H37L28 13M37 3V29L28 38" }: { children?: ReactNode; front?: string; top?: string }) => (
  <Svg w={40} h={42}>
    <path d={front} strokeWidth="1.600" />
    <path d={top} strokeWidth="1.600" />
    {children}
  </Svg>
);

const TOOL_GROUPS: { label: string; more?: boolean; icon: ReactNode }[][] = [
  [
    {
      label: "ボックス選択",
      more: true,
      icon: (
        <Svg w={42} h={42}>
          <rect x="2" y="2" width="38" height="38" stroke="#e8a83c" strokeWidth="2.500" strokeDasharray="7 4" />
          <path d="M15 12V31L20 26L29 25Z" fill="#ececec" stroke="none" />
        </Svg>
      )
    },
    {
      label: "カーソル",
      icon: (
        <Svg w={44} h={44}>
          <circle cx="22" cy="22" r="20" stroke="#b8545a" strokeWidth="2" />
          <circle cx="22" cy="22" r="20" stroke="#fff" strokeWidth="2.500" strokeDasharray="8 7.700" />
          <path d="M22 10V18M22 26V34M10 22H18M26 22H34" strokeWidth="1.500" />
        </Svg>
      )
    }
  ],
  [
    {
      label: "移動",
      icon: (
        <Svg w={42} h={42}>
          <path d="M21 1L26 9H16ZM21 41L16 33H26ZM1 21L9 16V26ZM41 21L33 26V16Z" fill="currentColor" stroke="none" />
          <path d="M21 10V16M21 26V32M10 21H16M26 21H32" strokeWidth="3" />
        </Svg>
      )
    },
    {
      label: "回転",
      icon: (
        <Svg w={42} h={42}>
          <path d="M5 19A16 16 0 0 1 33 10M37 23A16 16 0 0 1 9 33" strokeWidth="2" />
          <path d="M1 19H10L5 27ZM41 23H32L37 15Z" fill="currentColor" stroke="none" />
          <path d="M21 15L27 21L21 27L15 21Z" fill="#a8a8a8" stroke="none" />
        </Svg>
      )
    },
    {
      label: "スケール",
      more: true,
      icon: (
        <Svg w={36} h={36}>
          <path d="M4 16V4H32V32H22" strokeWidth="1.600" opacity="0.8" />
          <path d="M2 18H19V34H2Z" fill="currentColor" stroke="none" />
          <path d="M19 17L26 10" strokeWidth="3" />
          <path d="M21 9L29 7L27 15Z" fill="currentColor" stroke="none" />
        </Svg>
      )
    },
    {
      label: "トランスフォーム",
      icon: (
        <Svg w={40} h={40}>
          <circle cx="20" cy="20" r="17" strokeWidth="1.800" strokeDasharray="19 7.700" strokeDashoffset="-4" />
          <path d="M13 13H27V27H13ZM20 1L24 9H16ZM20 39L16 31H24ZM1 20L8 16V24ZM39 20L32 24V16Z" fill="currentColor" stroke="none" />
        </Svg>
      )
    }
  ],
  [
    {
      label: "アノテート",
      more: true,
      icon: (
        <Svg w={46} h={40}>
          <path d="M5 31Q13 38 22 29Q34 17 44 32" stroke={MINT} strokeWidth="2.200" />
          <path d="M2 31L6 23L22 7L27 12L11 27Z" fill="currentColor" stroke="none" />
          <path d="M24 5L27 2Q29 1 31 3Q33 5 31 7L28 10Z" fill="currentColor" stroke="none" />
        </Svg>
      )
    },
    {
      label: "メジャー",
      icon: (
        <Svg w={40} h={44}>
          <path d="M13 34V15A19 19 0 0 1 30 34Z" fill={MINT} stroke="none" />
          <path d="M13 12Q32 14 34 34" stroke={MINT} strokeWidth="1.500" />
          <path d="M2 1H12V36H38V42H2V39H5V4H2Z" fill="currentColor" stroke="none" />
          <path d="M10 5V36" stroke="#2f2f2f" strokeWidth="4" strokeDasharray="1 2" />
          <path d="M13 36.500H38" stroke="#2f2f2f" strokeWidth="3" strokeDasharray="1 2" />
        </Svg>
      )
    }
  ],
  [
    {
      label: "押し出し",
      more: true,
      icon: (
        <Cube front="M2 20V40H28V20" top="M28 40L37 33V10">
          <path d="M2 9L11 2H37V13L28 20H2Z" fill={MINT} stroke="none" />
          <path d="M2 9H28V20M28 9L37 2" stroke="#2f4a3d" strokeWidth="1.500" />
        </Cube>
      )
    },
    {
      label: "面を差し込む",
      icon: (
        <Cube front="" top="M2 12L11 4H37L28 12M37 4V31L28 38">
          <path d="M2 12H28V38H2Z" fill={MINT} stroke="none" />
          <path d="M10 20H20V30H10Z" fill="#2a2a2a" stroke="#2f4a3d" />
          <path d="M2 12L10 20M28 12L20 20M2 38L10 30M28 38L20 30" stroke="#2f4a3d" strokeWidth="1.500" />
        </Cube>
      )
    },
    {
      label: "ベベル",
      icon: (
        <Cube front="M2 20V37H28V20" top="M8 11L13 5H30M28 37L37 29V14">
          <path d="M7 11H24L28 20H2Z" fill={MINT} stroke="none" />
          <path d="M31 5L37 14L29 19L25 11Z" fill={MINT} stroke="none" />
        </Cube>
      )
    },
    {
      label: "ループカット",
      more: true,
      icon: (
        <Cube front="M11 38H2V12H12M18 12H28V38H18" top="M2 12L11 4H20M27 4H37L28 12M37 4V30L28 38">
          <path d="M15 38V11L24 3" stroke={MINT} strokeWidth="2.500" />
        </Cube>
      )
    },
    {
      label: "ナイフ",
      more: true,
      icon: (
        <Cube>
          <path d="M23 38L12 13L24 4" stroke={MINT} strokeWidth="1.800" />
          <g fill={MINT} stroke="none">
            <circle cx="23" cy="38" r="3.500" />
            <circle cx="12" cy="13" r="3.500" />
            <circle cx="24" cy="4" r="3.500" />
          </g>
        </Cube>
      )
    },
    {
      label: "ポリビルド",
      icon: (
        <Svg w={40} h={42}>
          <path d="M16 3L39 7V30H2Z" fill={MINT} stroke="none" />
          <circle cx="16" cy="3" r="3" fill="currentColor" stroke="none" />
        </Svg>
      )
    }
  ]
];

const Toolbar = () => (
  <div className="ml-[14px] mt-[14px] flex w-[72px] shrink-0 flex-col gap-[9px] overflow-hidden">
    {TOOL_GROUPS.map((group, g) => (
      <div key={g} className="flex shrink-0 flex-col gap-px overflow-hidden rounded-md bg-[#353535]">
        {group.map((t, i) => (
          <button
            key={t.label}
            type="button"
            aria-label={t.label}
            className={clsx(
              "relative flex h-[60px] items-center justify-center pr-1 pb-[2px] text-[#e6e6e6]",
              g === 0 && i === 0 ? "bg-[#527ac0]" : "bg-[#2f2f2f]"
            )}
          >
            {t.icon}
            {t.more ? <span className="absolute bottom-1 right-1 h-[7px] w-[7px] bg-[#9a9a9a] [clip-path:polygon(100%_0,100%_100%,0_100%)]" /> : null}
          </button>
        ))}
      </div>
    ))}
  </div>
);

const NAV_BUTTONS: { label: string; icon: ReactNode }[] = [
  {
    label: "透視投影/平行投影",
    icon: (
      <Svg w={30} h={26}>
        <path d="M7 2H23L29 24H1ZM6 9H25M4 16H27M12 2L10 24M18 2L20 24" strokeWidth="1.800" />
      </Svg>
    )
  },
  { label: "カメラビュー", icon: <MovieCamera w={31} /> },
  {
    label: "ビューを移動",
    icon: (
      <Svg w={30} h={30}>
        <path d="M9 17L6 6M13 15L12 3M18 15L19 3M22 17L25 7" strokeWidth="3.200" strokeLinecap="round" />
        <path d="M8 14H24Q25 27 17 29Q12 30 8 24L1 17Q2 14 5 16L8 18Z" fill="currentColor" stroke="none" />
      </Svg>
    )
  },
  {
    label: "ズーム",
    icon: (
      <Svg w={30} h={30}>
        <circle cx="18" cy="12" r="11" fill="currentColor" stroke="none" />
        <path d="M10 20L2 28" strokeWidth="3.500" strokeLinecap="round" />
        <path d="M18 6V18M12 12H24" stroke="#2a2a2a" strokeWidth="2" />
      </Svg>
    )
  }
];

const AxisGizmo = () => (
  <svg width="124" height="142" viewBox="1437 137 124 142" className="shrink-0" aria-hidden="true">
    <path d="M1497 208V152" stroke="#2890ff" strokeWidth="2.500" />
    <path d="M1497 208L1524 200" stroke="#6a8a2c" strokeWidth="2.500" />
    <circle cx="1448" cy="205" r="10.500" fill="#9b3447" />
    <circle cx="1471" cy="216" r="10.500" fill="#8bdc00" />
    <circle cx="1498" cy="265" r="10.500" fill="#2f65a3" />
    <circle cx="1524" cy="200" r="13" fill="#5f8a17" />
    <path d="M1498 208L1540 212" stroke="#f0503f" strokeWidth="2.500" />
    <circle cx="1497" cy="152" r="13" fill="#2890ff" />
    <circle cx="1548" cy="212" r="13" fill="#ff3653" />
    <g fontSize="18" fill="#111" textAnchor="middle">
      <text x="1497" y="158">Z</text>
      <text x="1524" y="206">Y</text>
      <text x="1548" y="218">X</text>
    </g>
  </svg>
);

const Viewport = () => (
  <section className="relative flex min-h-0 flex-1 flex-col rounded-lg bg-[#393939]">
    <Scene3D />
    <div className="relative z-10">
      <ViewportHeader />
    </div>
    <div className="relative flex min-h-0 flex-1 overflow-hidden rounded-b-lg">
      <Toolbar />
      <div className="ml-[49px] mt-[9px] leading-[36px] text-white [text-shadow:1px_1px_2px_#000]">
        <p>ユーザー・透視投影</p>
        <p>(1) Suzanne</p>
      </div>
      <div className="ml-auto flex gap-[5px] pt-[15px]">
        {NAV_BUTTONS.map((b) => (
          <button key={b.label} type="button" aria-label={b.label} className="flex h-12 w-12 items-center justify-center rounded-full bg-[#272727] text-[#dcdcdc]">
            {b.icon}
          </button>
        ))}
        <AxisGizmo />
      </div>
      <button type="button" aria-label="サイドバー" className="mt-[25px] ml-[9px] flex h-[24px] w-[14px] shrink-0 items-center justify-center rounded-l bg-[#303030] text-[#b0b0b0]">
        <Svg w={9} h={14}><path d="M8 1L2 7L8 13" strokeWidth="1.800" /></Svg>
      </button>
    </div>
  </section>
);

const TRANSPORT: [string, string][] = [
  ["先頭へ", "M4 2H6V20H4ZM18 3V19L8 11Z"],
  ["前のキーフレーム", "M8 3L15 11L8 19L1 11ZM24 3V19L16 11Z"],
  ["逆再生", "M19 1V21L4 11Z"],
  ["再生", "M5 1L20 11L5 21Z"],
  ["次のキーフレーム", "M17 3L24 11L17 19L10 11ZM1 3L9 11L1 19Z"],
  ["末尾へ", "M18 2H20V20H18ZM6 3L16 11L6 19Z"]
];

const FRAMES = [20, 40, 60, 80, 100, 120, 140, 160, 180, 200, 220, 240];

const Timeline = () => (
  <section className="mt-[3px] h-[72px] shrink-0 overflow-hidden rounded-lg bg-[#2b2b2b]">
    <div className="flex h-[44px] items-center bg-[#383838] pl-[14px] pr-8 text-[#dedede]">
      <IconMenu label="タイムライン">
        <Svg w={26} h={26}>
          <circle cx="13" cy="13" r="12" fill="#dcdcdc" stroke="none" />
          <path d="M18 6L12 13L17 19" stroke="#2b2b2b" strokeWidth="3" />
        </Svg>
      </IconMenu>
      <button type="button" className="ml-[10px] flex h-[33px] w-[79px] items-center justify-between rounded-l-md border-r border-[#404040] bg-[#2b2b2b] pl-[13px] pr-1">
        再生 <Chevron />
      </button>
      <button type="button" className="flex h-[33px] w-[138px] items-center justify-between bg-[#2b2b2b] pl-[14px] pr-1">
        キーイング <Chevron />
      </button>
      <button type="button" className="ml-[14px]">ビュー</button>
      <button type="button" className="ml-[25px]">マーカー</button>
      <button type="button" aria-label="自動キー挿入" className="ml-auto flex h-[33px] w-[33px] items-center justify-center rounded-md bg-[#545454]">
        <span className="h-[15px] w-[15px] rounded-full bg-[#e0e0e0]" />
      </button>
      <div className="ml-[10px] flex h-[33px] gap-px overflow-hidden rounded-md">
        {TRANSPORT.map(([label, d]) => (
          <button key={label} type="button" aria-label={label} className="flex w-[34px] items-center justify-center bg-[#545454]">
            <Svg w={25} h={22} className="text-[#ececec]">
              <path d={d} fill="currentColor" stroke="none" />
            </Svg>
          </button>
        ))}
      </div>
      <input aria-label="現在のフレーム" defaultValue="1" className="ml-[176px] h-[33px] w-[130px] rounded-md bg-[#545454] text-center text-[#e6e6e6]" />
      <button type="button" aria-label="プレビュー範囲を使用" className="ml-[9px] flex h-[33px] w-[34px] items-center justify-center rounded-l-md border-r border-[#404040] bg-[#545454]">
        <Svg w={24} h={26}>
          <circle cx="12" cy="15" r="9.500" strokeWidth="1.800" />
          <path d="M12 9V16H17M8 1.500H16M12 2V5M19 6L22 3" strokeWidth="1.800" />
        </Svg>
      </button>
      <label className="flex h-[33px] w-[152px] items-center border-r border-[#404040] bg-[#545454] pl-[27px] pr-[24px]">
        開始:
        <input defaultValue="1" className="min-w-0 flex-1 bg-transparent text-right" />
      </label>
      <label className="flex h-[33px] w-[151px] items-center rounded-r-md bg-[#545454] pl-[26px] pr-[23px]">
        終了:
        <input defaultValue="250" className="min-w-0 flex-1 bg-transparent text-right" />
      </label>
    </div>
    <div className="relative h-[28px]">
      <span className="absolute left-[37px] top-1 h-[24px] w-[40px] rounded-t-md bg-[#4f74b5]" />
      <div className="absolute left-0 right-0 top-[12px] text-[17px] leading-[17px] text-[#9c9c9c]">
        <span className="absolute left-[52px] text-white">1</span>
        {FRAMES.map((f) => (
          <span key={f} className="absolute w-12 text-center" style={{ left: 144 + (f - 20) * 5.9 }}>
            {f}
          </span>
        ))}
      </div>
      <div className="absolute left-[14px] right-[14px] top-[7px] flex h-[17px] items-center justify-between rounded-full bg-[#666666] px-[2px]">
        <span className="h-3 w-3 rounded-full bg-[#4a4a4a]" />
        <span className="h-3 w-3 rounded-full bg-[#4a4a4a]" />
      </div>
    </div>
  </section>
);

type OutlinerRow = { name: string; selected?: boolean; icon: ReactNode; badge?: ReactNode };

const OBJECT_ROWS: OutlinerRow[] = [
  {
    name: "Camera",
    icon: <MovieCamera className="text-[#de8f4d]" />,
    badge: (
      <span className="flex h-[33px] w-[29px] items-center overflow-hidden rounded-l-lg bg-[#5a6560] pl-[3px] text-[#1fc997]">
        <MovieCamera outline />
      </span>
    )
  },
  {
    name: "Light",
    icon: (
      <Svg w={26} h={28} className="text-[#de8f4d]">
        <path d="M13 1A10 10 0 0 0 7 19V20H19V19A10 10 0 0 0 13 1Z" fill="currentColor" stroke="none" />
        <path d="M8 22.500H18M9 25H17M11 27.500H15" strokeWidth="1.500" />
        <path d="M8 10L11 12V17M18 10L15 12V17M11 12H15" stroke="#3a2a1c" strokeWidth="1.500" />
      </Svg>
    ),
    badge: (
      <Svg w={26} h={28} className="mr-[25px] text-[#1fb58a]">
        <path d="M8 22A11 11 0 1 1 18 22" strokeWidth="2" />
        <circle cx="13" cy="12" r="2" strokeWidth="2" />
        <path d="M13 16V28" strokeWidth="2" strokeDasharray="3 2" />
      </Svg>
    )
  },
  {
    name: "Suzanne",
    selected: true,
    icon: (
      <Svg w={26} h={26} className="text-[#de8f4d]">
        <path d="M3 3H23L13 22Z" strokeWidth="4" strokeLinejoin="round" />
      </Svg>
    ),
    badge: (
      <span className="flex h-[32px] w-[20px] items-center overflow-hidden rounded-l-lg border border-r-0 border-[#2f6b57] bg-[#20443a] pl-[5px]">
        <Svg w={26} h={26} className="text-[#1fc997]">
          <path d="M1 2H6V7H1ZM10 19H15V24H10ZM6 4H25M5 7L11 19" strokeWidth="2" />
        </Svg>
      </span>
    )
  }
];

const Outliner = () => (
  <section className="flex h-[310px] shrink-0 flex-col overflow-hidden rounded-lg bg-[#282828] text-[#c8c8c8]">
    <div className="flex h-[46px] shrink-0 items-center gap-[10px] bg-[#3b3b3b] pb-[1px] pl-[15px]">
      <IconMenu label="アウトライナー">
        <Svg w={28} h={26}>
          <path d="M2 1H10V8H2ZM13 11H26V17H13ZM13 20H26V26H13Z" fill="currentColor" stroke="none" />
          <path d="M5 8V23H12M5 14H12" strokeWidth="1.600" opacity="0.7" />
        </Svg>
      </IconMenu>
      <IconMenu label="表示モード">
        <LayersIcon />
      </IconMenu>
      <label className="ml-[18px] flex h-[33px] flex-1 items-center rounded-l-md bg-[#1d1d1d] pl-2 text-[#d0d0d0]">
        <Svg w={26} h={26}>
          <circle cx="16" cy="9" r="7.500" strokeWidth="2" />
          <path d="M11 15L2 24" strokeWidth="2.500" />
        </Svg>
        <input aria-label="検索" className="min-w-0 flex-1 bg-transparent outline-none" />
      </label>
    </div>
    <div className="flex h-[35px] shrink-0 items-center gap-3 pt-[3px] pl-[40px]">
      <ArchiveIcon />
      シーンコレクション
    </div>
    <div className="flex h-[35px] shrink-0 items-center bg-[#2c2c2c] pl-[46px] pr-[18px]">
      <Triangle open />
      <input type="checkbox" defaultChecked aria-label="Collection を有効化" className="peer absolute ml-[32px] h-[18px] w-[18px] appearance-none rounded-sm bg-[#e0e0e0]" />
      <Svg w={18} h={18} className="pointer-events-none relative ml-[20px] text-[#222]">
        <path d="M4 8L8 13L14 5" strokeWidth="3" />
      </Svg>
      <span className="ml-2 flex h-[32px] w-[36px] items-center justify-center rounded-lg bg-[#444444]">
        <ArchiveIcon />
      </span>
      <span className="ml-[7px] pt-1">Collection</span>
      <button type="button" aria-label="Collection を隠す" className="ml-auto pb-[2px]"><EyeIcon /></button>
    </div>
    {OBJECT_ROWS.map((row) => (
      <div key={row.name} className="relative flex h-[35px] shrink-0 items-center pl-[82px] pr-[18px] odd:bg-[#282828] even:bg-[#2c2c2c]">
        <span className="absolute left-[86px] top-[-9px] h-[26px] w-[26px] border-b border-l border-[#6a6a6a]" />
        <span className="relative"><Triangle /></span>
        <span className={clsx("relative ml-[10px] flex h-[32px] w-[36px] items-center justify-center rounded-lg", row.selected && "bg-[#5c5c5c]")}>{row.icon}</span>
        <span className={clsx("ml-[7px] pt-1", row.selected && "text-[#f5a623]")}>{row.name}</span>
        <span className="ml-auto mr-[7px]">{row.badge}</span>
        <button type="button" aria-label={`${row.name} を隠す`} className="pb-[2px]"><EyeIcon /></button>
      </div>
    ))}
    <div className="h-[35px] shrink-0 bg-[#2c2c2c]" />
    <div className="h-[35px] shrink-0 bg-[#282828]" />
    <div className="h-[35px] shrink-0 bg-[#2c2c2c]" />
  </section>
);

type Tab = { label: string; color: string; active?: boolean; icon: ReactNode };

const TOP_TABS: Tab[] = [
  {
    label: "レンダー",
    color: "text-[#d0d0d0]",
    icon: (
      <Svg w={26} h={24}>
        <path d="M1 5H5L7 1H14L16 5H25V23H1Z" fill="currentColor" stroke="none" />
        <path d="M4 9H16V19H4Z" fill="#333" stroke="none" />
        <path d="M5 12H15M5 15H15" stroke="#888" />
        <path d="M20 9H23M20 14H23M20 19H23" stroke="#2c2c2c" strokeWidth="3" />
      </Svg>
    )
  },
  {
    label: "出力",
    color: "text-[#d0d0d0]",
    icon: (
      <Svg w={26} h={26}>
        <path d="M1 1H25V10H21V7H5V10H1Z" fill="currentColor" stroke="none" />
        <path d="M6 9H20V25H6Z" fill="#8a8a8a" stroke="none" />
        <path d="M8 22L12 15L16 22Z" fill="#2c2c2c" stroke="none" />
      </Svg>
    )
  },
  { label: "ビューレイヤー", color: "text-[#d0d0d0]", icon: <LayersIcon /> },
  { label: "シーン", color: "text-[#d0d0d0]", icon: <SceneIcon /> },
  {
    label: "ワールド",
    color: "text-[#d0606c]",
    icon: (
      <Svg w={26} h={26}>
        <circle cx="13" cy="13" r="10.500" strokeWidth="1.800" />
        <path d="M1 25L4 21M22 5L25 1" strokeWidth="1.800" />
        <path d="M5 7L11 3L14 6L11 9L12 12L8 14L4 11ZM12 14L18 13L20 16L16 22L13 20ZM18 5L22 9L18 10Z" fill="currentColor" stroke="none" />
      </Svg>
    )
  }
];

const OBJECT_TABS: Tab[] = [
  { label: "オブジェクト", color: "text-[#f09a52]", active: true, icon: <ObjectIcon /> },
  {
    label: "モディファイアー",
    color: "text-[#6f9ce0]",
    icon: (
      <Svg w={26} h={26}>
        <path d="M2 20L13 11Q11 3 18 1L21 2L17 6L20 10L25 7Q26 15 17 15L7 24Q4 27 1.500 24.500Q0 22 2 20Z" fill="currentColor" stroke="none" />
      </Svg>
    )
  },
  {
    label: "パーティクル",
    color: "text-[#5e86c4]",
    icon: (
      <Svg w={26} h={26}>
        <circle cx="5" cy="5" r="5" fill="#6f9ce0" stroke="none" />
        <path d="M5 8V20M8 5H20M8 8L21 20" strokeWidth="1.500" />
        <g fill="currentColor" stroke="none"><circle cx="5" cy="22" r="3" /><circle cx="23" cy="5" r="3" /><circle cx="22" cy="21" r="4" /></g>
      </Svg>
    )
  },
  {
    label: "物理演算",
    color: "text-[#5e7db0]",
    icon: (
      <Svg w={26} h={26}>
        <path d="M16 3A11 11 0 1 0 23 18" strokeWidth="1.800" />
        <circle cx="13" cy="13" r="5" fill="#6f9ce0" stroke="none" />
        <circle cx="22.500" cy="4" r="3.500" fill="currentColor" stroke="none" />
      </Svg>
    )
  },
  {
    label: "オブジェクトコンストレイント",
    color: "text-[#6f93cc]",
    icon: (
      <Svg w={26} h={26}>
        <path d="M3 11L18 2Q24 0 25 6L19 20Q15 26 8 25Q-1 21 3 11Z" strokeWidth="1.800" />
        <circle cx="10.500" cy="16" r="5.500" strokeWidth="2.500" />
        <circle cx="10.500" cy="16" r="2" fill="currentColor" stroke="none" />
        <circle cx="20.500" cy="6" r="1.500" fill="currentColor" stroke="none" />
      </Svg>
    )
  },
  {
    label: "オブジェクトデータ",
    color: "text-[#13b07f]",
    icon: (
      <Svg w={26} h={26}>
        <path d="M1 2H6V7H1ZM20 2H25V7H20ZM6 4.500H20M5 7L12 22M21 7L14 22M10.500 21H15.500V25H10.500Z" strokeWidth="1.800" />
      </Svg>
    )
  }
];

const PropTab = ({ tab }: { tab: Tab }) => (
  <button type="button" aria-label={tab.label} className={clsx("flex h-[47px] shrink-0 items-center justify-center rounded-l-md", tab.color, tab.active ? "bg-[#424242]" : "bg-[#2c2c2c]")}>
    {tab.icon}
  </button>
);

const TRANSFORMS = [
  { id: "loc", label: "位置", value: "0m" },
  { id: "rot", label: "回転", value: "0°" },
  { id: "scale", label: "拡大縮小", value: "1.0" }
];

const AnimateDot = () => <button type="button" aria-label="キーフレーム挿入" className="ml-[18px] h-[7px] w-[7px] rounded-full bg-[#d4d4d4]" />;

const Properties = () => (
  <section className="mt-[3px] flex min-h-0 flex-1 flex-col overflow-hidden rounded-lg bg-[#383838] text-[#dedede]">
    <div className="flex h-[44px] shrink-0 items-center bg-[#3a3a3a] pl-[15px] pr-[18px]">
      <IconMenu label="プロパティエディター">
        <Svg w={26} h={26}>
          <path d="M5 1H21A5 5 0 0 1 21 11H5A5 5 0 0 1 5 1ZM5 15H21A5 5 0 0 1 21 25H5A5 5 0 0 1 5 15Z" strokeWidth="1.800" />
          <path d="M5 2H11V10H5A4 4 0 0 1 5 2ZM5 15H18V25H5A5 5 0 0 1 5 15Z" fill="currentColor" stroke="none" />
        </Svg>
      </IconMenu>
      <ObjectIcon className="ml-[24px] mr-[14px] text-[#ececec]" />
      Suzanne
      <button type="button" aria-label="ピン" className="ml-auto text-[#8c8c8c]">
        <Svg w={26} h={26}>
          <path d="M1 25L9 17M5 12L14 21L16 14L24 9L17 1L11 9Z" strokeWidth="1.800" />
        </Svg>
      </button>
    </div>
    <div className="flex min-h-0 flex-1">
      <nav className="flex w-[49px] shrink-0 flex-col gap-[2px] overflow-hidden bg-[#212121] pl-[2px] pt-[15px]">
        <button type="button" aria-label="ツール" className="mb-[13px] flex h-[47px] shrink-0 items-center justify-center rounded-l-md bg-[#2c2c2c] text-[#d0d0d0]">
          <Svg w={26} h={26}>
            <path d="M5 1V13" strokeWidth="1.500" />
            <path d="M1 13H9V16L7 17Q10 20 8 24Q5 27 2 24Q0 20 3 17L1 16Z" fill="currentColor" stroke="none" />
            <path d="M14 2Q13 9 18 11V26H22V11Q27 9 25 2L23 7H17Z" fill="currentColor" stroke="none" />
          </Svg>
        </button>
        {TOP_TABS.map((t) => <PropTab key={t.label} tab={t} />)}
        <span className="h-[13px] shrink-0" />
        {OBJECT_TABS.map((t) => <PropTab key={t.label} tab={t} />)}
      </nav>
      <div className="min-w-0 flex-1 overflow-hidden">
        <div className="bg-[#424242] pt-[15px]">
          <div className="ml-[15px] mr-[14px] flex h-[33px] overflow-hidden rounded-md">
            <button type="button" aria-label="オブジェクトを閲覧" className="flex w-[54px] items-center justify-center gap-1 bg-[#2b2b2b]">
              <ObjectIcon />
              <Chevron />
            </button>
            <input aria-label="名前" defaultValue="Suzanne" className="min-w-0 flex-1 border-l border-[#3a3a3a] bg-[#1d1d1d] px-3" />
          </div>
          <h2 className="mt-[17px] flex h-[40px] items-center gap-[13px] pl-[14px] pr-[14px] text-[21px]">
            <Triangle open />
            トランスフォーム
            <span className="ml-auto"><Grip /></span>
          </h2>
        </div>
        <div className="flex flex-col gap-1 pt-[14px]">
          {TRANSFORMS.map((t) => (
            <div key={t.id} className="flex flex-col gap-px">
              {["X", "Y", "Z"].map((axis, i) => (
                <div key={axis} className="flex h-[34px] items-center">
                  <label htmlFor={t.id + axis} className="w-[109px] shrink-0 text-right">
                    {i === 0 ? `${t.label} ${axis}` : axis}
                  </label>
                  <input
                    id={t.id + axis}
                    defaultValue={t.value}
                    className={clsx("ml-[15px] h-full w-[74px] bg-[#565656] text-center", i === 0 && "rounded-tl-md", i === 2 && "rounded-bl-md")}
                  />
                  <button type="button" aria-label={`${t.label} ${axis} をロック`} className="ml-[5px] text-[#8a8a8a]">
                    <Svg w={26} h={22}>
                      <path d="M1 7Q1 2 6 2Q11 2 11 7V10M9 10H24V20H9Z" strokeWidth="1.800" />
                      <path d="M16.500 13V17" strokeWidth="2" />
                    </Svg>
                  </button>
                  <AnimateDot />
                </div>
              ))}
            </div>
          ))}
        </div>
        <div className="mt-[9px] flex h-[33px] items-center">
          <label htmlFor="rotmode" className="w-[109px] shrink-0 text-right">回転モード</label>
          <div className="relative ml-[15px] mr-[31px]">
            <select id="rotmode" className="h-[33px] w-[74px] appearance-none rounded-md bg-[#2b2b2b] pl-[13px]">
              <option>XYZ</option>
            </select>
            <Chevron className="pointer-events-none absolute right-[4px] top-[13px]" />
          </div>
          <AnimateDot />
        </div>
        <h3 className="mt-[18px] flex h-[39px] items-center gap-[12px] whitespace-nowrap pl-[38px]">
          <Triangle />
          デルタトランスフォーム
        </h3>
        {["関係", "コレクション"].map((s) => (
          <h2 key={s} className="flex h-[42px] items-center gap-[12px] bg-[#424242] pl-[14px] pr-[14px] text-[21px]">
            <Triangle />
            {s}
            <span className="ml-auto"><Grip /></span>
          </h2>
        ))}
      </div>
    </div>
  </section>
);

const MouseIcon = ({ side, drag }: { side: "left" | "middle" | "right"; drag?: boolean }) => (
  <Svg w={drag ? 28 : 20} h={26} className="text-[#a8a8a8]">
    <rect x="1" y="1" width="18" height="24" rx="5" strokeWidth="1.600" />
    {side === "middle" ? (
      <rect x="8" y="6" width="4" height="8" rx="2" fill="currentColor" stroke="none" />
    ) : (
      <path d={side === "left" ? "M1 12V5Q1 1 5 1H10V12Z" : "M19 12V5Q19 1 15 1H10V12Z"} fill="currentColor" stroke="none" />
    )}
    {drag ? <path d="M22.500 1V12M26.500 3V10" strokeWidth="1.500" /> : null}
  </Svg>
);

const StatusBar = () => (
  <footer className="mt-px flex h-[35px] shrink-0 items-center border-b-2 border-[#111111] bg-[#2f2f2f] pl-[21px] pr-[2px] text-[#a8a8a8]">
    <div className="flex w-[462px] items-center">
      <MouseIcon side="left" />
      <span className="ml-[18px] mr-[20px]">選択</span>
      <MouseIcon side="left" drag />
      <span className="ml-[13px]">ボックス選択</span>
    </div>
    <div className="flex w-[462px] items-center">
      <MouseIcon side="middle" />
      <span className="ml-[18px] mr-[20px]">選択</span>
      <MouseIcon side="middle" drag />
      <span className="ml-[13px]">移動</span>
    </div>
    <div className="flex flex-1 items-center">
      <MouseIcon side="right" />
      <span className="ml-[18px]">Mode</span>
      <span className="ml-auto whitespace-nowrap">Suzanne | 頂点:67/507 | 辺:100/1,005 | 面:35/500 |</span>
    </div>
  </footer>
);

/* red tutorial marks drawn over the window */
const Annotations = () => (
  <svg className="pointer-events-none absolute inset-0 z-30 h-full w-full" viewBox="0 0 1920 1080" fill="none" aria-hidden="true">
    <rect x="693.500" y="69.500" width="83" height="53" rx="5" stroke="#fe0000" strokeWidth="5" />
    <rect x="1158.500" y="734.500" width="88" height="55" rx="5" stroke="#fe0000" strokeWidth="5" />
    <path d="M718 124H721L746 589L752 588L741 612L729 588L734 589Z" fill="#fe0000" />
    <path d="M888 638L1104 736L1109 727L1129 753L1096 757L1100 747Z" fill="#fe0000" />
  </svg>
);

export default function App() {
  return (
    <div className="relative flex h-screen w-full flex-col overflow-hidden bg-[#1b1b1b] font-['DejaVu_Sans','Noto_Sans_CJK_JP',sans-serif] text-[19px] leading-[24px]">
      <TitleBar />
      <TopBar />
      <main className="flex min-h-0 flex-1 gap-1 pl-px pr-px pt-px">
        <div className="flex min-w-0 flex-1 flex-col">
          <Viewport />
          <Timeline />
        </div>
        <aside className="flex w-[331px] shrink-0 flex-col">
          <Outliner />
          <Properties />
        </aside>
      </main>
      <StatusBar />
      <Annotations />
    </div>
  );
}
